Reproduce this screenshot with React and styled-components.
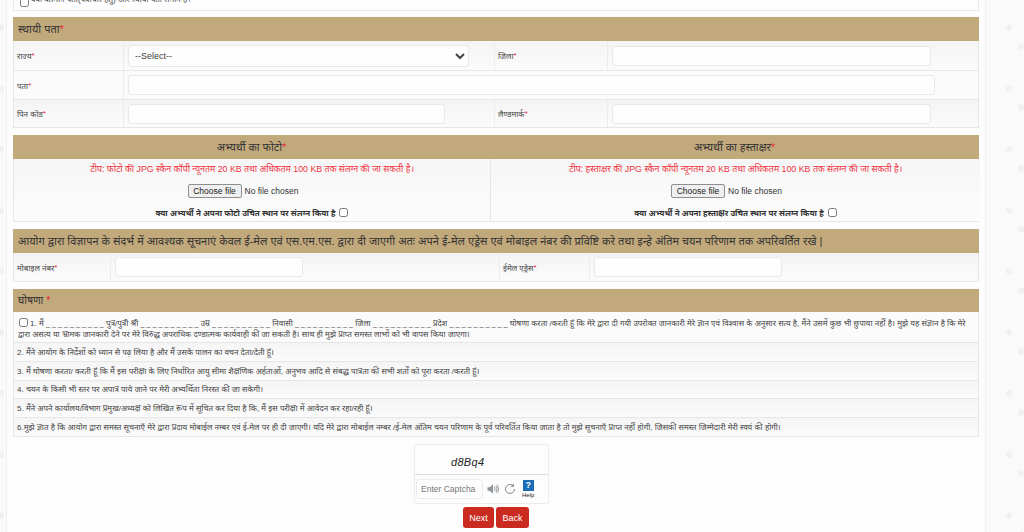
import React from "react";
import styled, { createGlobalStyle } from "styled-components";

const Global = createGlobalStyle`
  html, body { margin: 0; padding: 0; height: 532px; overflow: hidden; }
  body {
    font-family: "Liberation Sans", "Noto Sans", "Noto Sans Devanagari", sans-serif;
    color: #333;
    background-color: #fafafa;
    background-image: radial-gradient(circle, #f1f1f1 3px, transparent 3.5px), radial-gradient(circle, #f1f1f1 3px, transparent 3.5px);
    background-size: 48px 61px;
    background-position: -23px -3px, -11px 16px;
  }
  * { box-sizing: border-box; }
`;

const Page = styled.div`
  width: 980px;
  height: 532px;
  margin-left: 6px;
  padding: 0 6px;
  background: #fdfdfd;
  border-left: 1px solid #f0f0f0;
  border-right: 1px solid #f0f0f0;
  overflow: hidden;
`;
const Clip = styled.div`
  height: 11px;
  display: flex;
  align-items: flex-end;
  gap: 2px;
  padding: 0 6px 6px;
  margin-bottom: 6px;
  border: 1px solid #e8e8e8;
  border-top: 0;
  font-size: 8px;
  line-height: 8px;
  color: #444;
  overflow: hidden;
  & input { margin-bottom: -3px; }
`;
const Section = styled.section`
  margin-bottom: 7px;
`;
const Header = styled.h3`
  margin: 0;
  height: ${(p) => p.$h || 24}px;
  padding: 0 5px;
  background: #c2a97c;
  color: #333;
  font-size: ${(p) => p.$size || 11}px;
  font-weight: 400;
  line-height: ${(p) => p.$h || 24}px;
  text-align: ${(p) => (p.$center ? "center" : "left")};
  white-space: nowrap;
  overflow: hidden;
`;
const HeaderPair = styled.div`
  display: grid;
  grid-template-columns: 477px 489px;
`;
const Req = styled.span`
  color: #e8213a;
`;
const Grid = styled.div`
  display: grid;
  grid-template-columns: ${(p) => p.$cols};
  border-left: 1px solid #e6e6e6;
  border-right: 1px solid #e6e6e6;
`;
const Cell = styled.div`
  height: ${(p) => p.$h || 29}px;
  display: flex;
  align-items: center;
  padding: 0 4px 0 3px;
  border-bottom: 1px solid #e6e6e6;
  border-right: ${(p) => (p.$last ? "0" : "1px solid #ececec")};
  background: ${(p) => (p.$alt ? "#fbfbfb" : "linear-gradient(#f4f4f4, #fbfbfb)")};
  grid-column: ${(p) => p.$span || "auto"};
  font-size: 8px;
  color: #444;
  white-space: nowrap;
`;
const InputCell = styled(Cell)`
  padding-left: 4px;
`;
const Field = styled.input`
  display: block;
  height: ${(p) => p.$h || 20}px;
  width: ${(p) => p.$w}px;
  flex: none;
  background: #fdfdfd;
  border: 1px solid #e9e9e9;
  border-radius: 3px;
  outline: none;
`;
const Select = styled.select`
  display: block;
  width: 341px;
  height: 22px;
  padding: 0 2px;
  flex: none;
  font-family: "Liberation Sans", sans-serif;
  font-size: 9px;
  color: #444;
  background: #fdfdfd;
  border: 1px solid #e9e9e9;
  border-radius: 3px;
`;
const Uploads = styled.div`
  display: grid;
  grid-template-columns: 477px 489px;
  border: 1px solid #e6e6e6;
  border-top: 0;
`;
const Upload = styled.div`
  height: 62px;
  padding-top: 3px;
  display: flex;
  flex-direction: column;
  align-items: center;
  background: linear-gradient(#f6f6f6, #fcfcfc);
  border-right: ${(p) => (p.$last ? "0" : "1px solid #e6e6e6")};
`;
const Tip = styled.div`
  height: 14px;
  font-size: 8.8px;
  line-height: 14px;
  color: #f0333f;
  white-space: nowrap;
`;
const FileLine = styled.div`
  display: flex;
  align-items: center;
  gap: 3px;
  width: 129px;
  height: 15px;
  margin-top: 7px;
  font-size: 8.5px;
  color: #333;
`;
const FileButton = styled.button`
  width: 54px;
  height: 14px;
  padding: 0;
  background: #efefef;
  border: 1px solid #8f8f8f;
  border-radius: 2px;
  font: 8.5px "Liberation Sans", sans-serif;
  color: #222;
`;
const Confirm = styled.label`
  display: flex;
  align-items: center;
  gap: 4px;
  margin-top: 9px;
  font-size: 8px;
  font-weight: 700;
  color: #333;
  white-space: nowrap;
`;
const Check = styled.input.attrs({ type: "checkbox" })`
  width: 9px;
  height: 9px;
  margin: 0;
  flex: none;
`;
const Note = styled.div`
  display: flex;
  align-items: ${(p) => (p.$tall ? "flex-start" : "center")};
  height: ${(p) => p.$h || 19}px;
  padding: ${(p) => (p.$tall ? "6px 4px 0" : "2px 3px 0 3px")};
  background: ${(p) => (p.$alt ? "#fbfbfb" : "linear-gradient(#f5f5f5, #fbfbfb)")};
  border: 1px solid #e6e6e6;
  border-top: 0;
  font-size: 8px;
  line-height: 10.5px;
  color: #444;
  & > div { white-space: normal; }
  & input { margin: 0 2px 0 1px; vertical-align: -1px; }
`;
const Blank = styled.span`
  font-size: 7.2px;
`;
const CaptchaBox = styled.div`
  width: 135px;
  height: 60px;
  margin: 7px 0 0 401px;
  background: #fdfdfd;
  border: 1px solid #ececec;
  border-radius: 3px;
`;
const CaptchaText = styled.div`
  height: 30px;
  line-height: 35px;
  padding-left: 36px;
  font-size: 11px;
  font-style: italic;
  color: #222;
  letter-spacing: 0.3px;
  border-bottom: 1px solid #dcdcdc;
`;
const CaptchaRow = styled.div`
  display: flex;
  align-items: center;
  height: 28px;
  padding-left: 1px;
`;
const CaptchaInput = styled.input`
  width: 67px;
  height: 20px;
  padding: 0 4px;
  background: #fdfdfd;
  border: 1px solid #ececec;
  border-radius: 3px;
  font: 8.5px "Liberation Sans", sans-serif;
  outline: none;
  &::placeholder { color: #777; opacity: 1; }
`;
const IconGap = styled.svg`
  flex: none;
  margin-left: ${(p) => p.$ml}px;
`;
const HelpWrap = styled.div`
  display: flex;
  flex-direction: column;
  align-items: center;
  margin-left: 6px;
  font-size: 6px;
  line-height: 6px;
  color: #222;
`;
const HelpSquare = styled.div`
  width: 11px;
  height: 11px;
  margin-bottom: 1px;
  background: #1a6db5;
  color: #fff;
  font-size: 9px;
  font-weight: 700;
  line-height: 11px;
  text-align: center;
`;
const Actions = styled.div`
  display: flex;
  justify-content: center;
  gap: 2px;
  margin-top: 3px;
`;
const Action = styled.button`
  width: ${(p) => p.$w}px;
  height: 21px;
  padding: 0;
  background: #cb2a20;
  border: 0;
  border-radius: 3px;
  color: #fff;
  font: 9px "Liberation Sans", sans-serif;
`;

const blanks = <Blank>_ _ _ _ _ _ _ _ _ _</Blank>;

function FileInput() {
  return (
    <FileLine>
      <FileButton type="button">Choose file</FileButton>
      <span>No file chosen</span>
    </FileLine>
  );
}

export default function App() {
  return (
    <>
      <Global />
      <Page>
        <Clip>
          <Check />
          <span>क्या वर्तमान पता(पत्राचार हेतु) और स्थायी पता समान है?</span>
        </Clip>

        <Section>
          <Header>स्थायी पता<Req>*</Req></Header>
          <Grid $cols="110px 371px 113px 1fr">
            <Cell $h={30}>राज्य<Req>*</Req></Cell>
            <InputCell $h={30}><Select><option>--Select--</option></Select></InputCell>
            <Cell $h={30}>जिला<Req>*</Req></Cell>
            <InputCell $h={30} $last><Field $w={319} /></InputCell>
            <Cell $alt>पता<Req>*</Req></Cell>
            <InputCell $alt $span="2 / 5" $last><Field $w={807} /></InputCell>
            <Cell $h={28}>पिन कोड<Req>*</Req></Cell>
            <InputCell $h={28}><Field $w={317} /></InputCell>
            <Cell $h={28}>लैण्डमार्क<Req>*</Req></Cell>
            <InputCell $h={28} $last><Field $w={319} /></InputCell>
          </Grid>
        </Section>

        <Section>
          <HeaderPair>
            <Header $center $size={10.8}>अभ्यर्थी का फोटो<Req>*</Req></Header>
            <Header $center $size={10.8}>अभ्यर्थी का हस्ताक्षर<Req>*</Req></Header>
          </HeaderPair>
          <Uploads>
            <Upload>
              <Tip>टीप: फोटो की JPG स्कैन कॉपी न्यूनतम 20 KB तथा अधिकतम 100 KB तक संलग्न की जा सकती है।</Tip>
              <FileInput />
              <Confirm>क्या अभ्यर्थी ने अपना फोटो उचित स्थान पर संलग्न किया है <Check /></Confirm>
            </Upload>
            <Upload $last>
              <Tip>टीप: हस्ताक्षर की JPG स्कैन कॉपी न्यूनतम 20 KB तथा अधिकतम 100 KB तक संलग्न की जा सकती है।</Tip>
              <FileInput />
              <Confirm>क्या अभ्यर्थी ने अपना हस्ताक्षर उचित स्थान पर संलग्न किया है <Check /></Confirm>
            </Upload>
          </Uploads>
        </Section>

        <Section>
          <Header $size={11}>आयोग द्वारा विज्ञापन के संदर्भ में आवश्यक सूचनाएं केवल ई-मेल एवं एस.एम.एस. द्वारा दी जाएगी अतः अपने ई-मेल एड्रेस एवं मोबाइल नंबर की प्रविष्टि करे तथा इन्हे अंतिम चयन परिणाम तक अपरिवर्तित रखे |</Header>
          <Grid $cols="97px 389px 90px 1fr">
            <Cell>मोबाइल नंबर<Req>*</Req></Cell>
            <InputCell><Field $w={188} /></InputCell>
            <Cell>ईमेल एड्रेस <Req>*</Req></Cell>
            <InputCell $last><Field $w={188} /></InputCell>
          </Grid>
        </Section>

        <Section>
          <Header $size={10.5} $h={23}>घोषणा <Req>*</Req></Header>
          <Note $tall $h={31} $alt>
            <div>
              <Check />1. मैं {blanks} पुत्र/पुत्री श्री {blanks} उम्र {blanks} निवासी {blanks} जिला {blanks} प्रदेश {blanks} घोषणा करता /करती हूं कि मेरे द्वारा दी गयी उपरोक्त जानकारी मेरे ज्ञान एवं विश्वास के अनुसार सत्य है, मैंने उसमें कुछ भी छुपाया नहीं है। मुझे यह संज्ञान है कि मेरे द्वारा असत्य या भ्रामक जानकारी देने पर मेरे विरुद्ध अपराधिक दण्डात्मक कार्यवाही की जा सकती है। साथ ही मुझे प्राप्त समस्त लाभों को भी वापस किया जाएगा।
            </div>
          </Note>
          <Note>2. मैंने आयोग के निर्देशों को ध्यान से पढ़ लिया है और मैं उसके पालन का वचन देता/देती हूं।</Note>
          <Note>3. मैं घोषणा करता/ करती हूं कि मैं इस परीक्षा के लिए निर्धारित आयु सीमा शैक्षणिक अर्हताओं, अनुभव आदि से संबद्ध पात्रता की सभी शर्तों को पूरा करता /करती हूं।</Note>
          <Note $h={18}>4. चयन के किसी भी स्तर पर अपात्र पाये जाने पर मेरी अभ्यर्थिता निरस्त की जा सकेगी।</Note>
          <Note>5. मैंने अपने कार्यालय/विभाग प्रमुख/अध्यक्ष को लिखित रूप में सूचित कर दिया है कि, मैं इस परीक्षा में आवेदन कर रहा/रही हूं।</Note>
          <Note>6.मुझे ज्ञात है कि आयोग द्वारा समस्त सूचनाएँ मेरे द्वारा प्रदाय मोबाईल नम्बर एवं ई-मेल पर ही दी जाएगी। यदि मेरे द्वारा मोबाईल नम्बर /ई-मेल अंतिम चयन परिणाम के पूर्व परिवर्तित किया जाता है तो मुझे सूचनाएँ प्राप्त नहीं होगी, जिसकी समस्त जिम्मेदारी मेरी स्वयं की होगी।</Note>
        </Section>

        <CaptchaBox>
          <CaptchaText>d8Bq4</CaptchaText>
          <CaptchaRow>
            <CaptchaInput placeholder="Enter Captcha" />
            <IconGap $ml={4} width="12" height="12" viewBox="0 0 12 12">
              <path d="M0.5 4.2h2.2L6 1.2v9.6L2.7 7.8H0.5z" fill="#8f9498" />
              <path d="M7.4 3.8q1.2 2.2 0 4.4M9 2.6q2 3.4 0 6.8M10.4 1.6q2.6 4.4 0 8.8" fill="none" stroke="#8f9498" strokeWidth="0.9" />
            </IconGap>
            <IconGap $ml={5} width="12" height="12" viewBox="0 0 12 12">
              <path d="M10.5 6a4.5 4.5 0 1 1-1.4-3.3" fill="none" stroke="#777" strokeWidth="0.9" />
              <path d="M9.4 0.8v2.5H6.9" fill="none" stroke="#777" strokeWidth="0.9" />
            </IconGap>
            <HelpWrap>
              <HelpSquare>?</HelpSquare>
              <span>Help</span>
            </HelpWrap>
          </CaptchaRow>
        </CaptchaBox>

        <Actions>
          <Action type="button" $w={31}>Next</Action>
          <Action type="button" $w={33}>Back</Action>
        </Actions>
      </Page>
    </>
  );
}
